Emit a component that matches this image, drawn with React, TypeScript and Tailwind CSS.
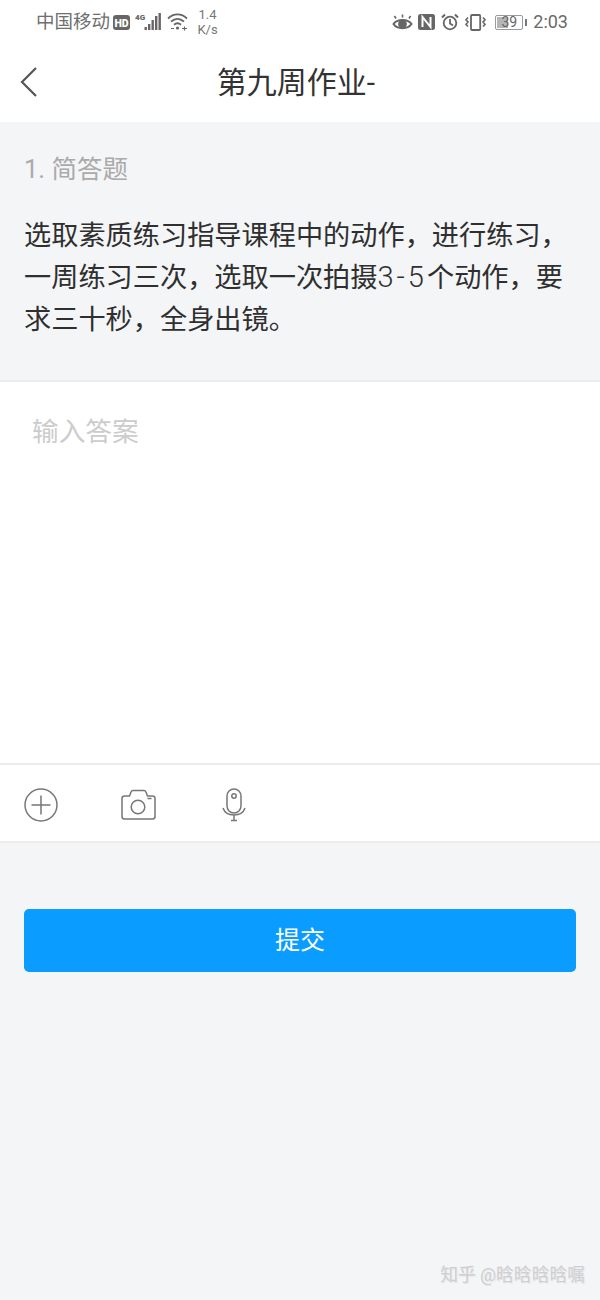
import React from "react";

const cjk = { fontFamily: '"Roboto", "Noto Sans CJK SC", sans-serif' };

function StatusLeft() {
  return (
    <div className="flex items-center text-[#6f6f6f]">
      <span className="text-[18.5px] leading-none">中国移动</span>
      <svg width="17" height="15" viewBox="0 0 17 15" className="ml-[3px]">
        <rect x="0" y="0" width="17" height="15" rx="3" fill="#666" />
        <text x="8.5" y="11.5" textAnchor="middle" fontSize="10.5" fontWeight="900" fill="#fff" fontFamily="Roboto">HD</text>
      </svg>
      <svg width="28" height="20" viewBox="0 0 28 20" className="ml-[5px]">
        <text x="0" y="7.5" fontSize="8" fontWeight="900" fill="#666" fontFamily="Roboto">4G</text>
        <rect x="9.5" y="15" width="2.4" height="3" fill="#666" />
        <rect x="13" y="12" width="2.4" height="6" fill="#666" />
        <rect x="16.5" y="8" width="2.4" height="10" fill="#666" />
        <rect x="20" y="4" width="2.4" height="14" fill="#666" />
        <rect x="23.5" y="1" width="2.4" height="17" fill="#666" />
      </svg>
      <svg width="22" height="18" viewBox="0 0 22 18" fill="none" stroke="#666" strokeWidth="1.8" className="ml-[4px]">
        <path d="M1 5.5 C6.5 0 14.5 0 20 5.5" />
        <path d="M4 8.7 C8 5 13 5 17 8.7" />
        <path d="M7 11.8 C9.5 9.6 11.5 9.6 14 11.8" />
        <circle cx="10.5" cy="15" r="1.6" fill="#666" stroke="none" />
        <path d="M4 15.5H7M15 15.5h5M17.5 13.5v4" strokeWidth="1.2" />
      </svg>
      <div className="ml-[8px] flex w-[21px] flex-col items-center text-[13px] leading-[15px] text-[#777]">
        <span>1.4</span>
        <span>K/s</span>
      </div>
    </div>
  );
}

function StatusRight() {
  return (
    <div className="flex items-center text-[#6f6f6f]">
      <svg width="21" height="17" viewBox="0 0 21 17" fill="none" stroke="#666" strokeWidth="2">
        <path d="M1.5 10 C5 4.5 16 4.5 19.5 10 C16 15.5 5 15.5 1.5 10Z" />
        <circle cx="10.5" cy="10" r="3.4" fill="#666" />
        <path d="M4 4.5 2.5 2M10.5 3.5V0.5M17 4.5 18.5 2" strokeWidth="1.6" />
      </svg>
      <svg width="17" height="16" viewBox="0 0 17 16" className="ml-[5px]">
        <rect x="0" y="0" width="17" height="16" rx="2.5" fill="#666" />
        <path d="M4.5 13V3L12.5 13V3" fill="none" stroke="#fff" strokeWidth="2" />
      </svg>
      <svg width="18" height="18" viewBox="0 0 18 18" fill="none" stroke="#666" strokeWidth="1.8" className="ml-[6px]">
        <circle cx="9" cy="10" r="6.3" />
        <path d="M9 6V10.5L12 12.5" />
        <path d="M1 4.5 4 1.5M17 4.5l-3-3" strokeWidth="2" />
      </svg>
      <svg width="21" height="17" viewBox="0 0 21 17" fill="none" stroke="#666" strokeWidth="1.6" className="ml-[6px]">
        <rect x="6" y="1" width="9.2" height="15" rx="1" strokeWidth="1.8" />
        <path d="M3 3.5 1 5.8 3 8 1 10.3 3 12.5M18 3.5l2 2.3-2 2.2 2 2.3-2 2.2" />
      </svg>
      <div className="relative ml-[9px] flex h-[15px] w-[28px] items-center justify-center rounded-[2px] border border-[#9a9a9a] text-[14px] leading-none text-[#666]">
        <div className="absolute inset-y-[1px] left-[1px] w-[11px] bg-[#b5b5b5]" />
        <span className="relative">39</span>
      </div>
      <div className="ml-[2px] h-[7px] w-[2px] bg-[#777]" />
      <span className="ml-[6px] text-[18px] leading-none text-[#6a6a6a]">2:03</span>
    </div>
  );
}

export default function App() {
  return (
    <div className="flex h-[1300px] w-[600px] flex-col bg-[#f4f5f7]" style={cjk}>
      <div className="bg-white">
        <div className="flex h-[44px] items-center justify-between pl-[36px] pr-[32px]">
          <StatusLeft />
          <StatusRight />
        </div>
        <div className="relative flex h-[78px] items-center justify-center pr-[8px]">
          <svg width="20" height="32" viewBox="0 0 20 32" fill="none" stroke="#555" strokeWidth="2.2" className="absolute left-[19px] top-[22px]">
            <path d="M17 2 3 16l14 14" />
          </svg>
          <span className="text-[30px] leading-none text-[#333]">第九周作业-</span>
        </div>
      </div>

      <div className="h-[258px] pl-[24px] pr-[25px] pt-[34px]">
        <div className="text-[25.5px] leading-[26px] text-[#aaaaaa]">1. 简答题</div>
        <p className="mt-[33px] text-[27.2px] leading-[42px] text-[#2f2f2f]">
          选取素质练习指导课程中的动作，进行练习，一周练习三次，选取一次拍摄<span className="text-[29px] leading-none font-light tracking-[3px]">3-5</span>个动作，要求三十秒，全身出镜。
        </p>
      </div>

      <div className="h-[385px] border-y-2 border-[#ececec] bg-white pl-[32px] pr-[33px] pt-[33px]">
        <div className="text-[26.7px] leading-[34px] text-[#cccccc]">输入答案</div>
      </div>

      <div className="flex h-[78px] items-center border-b-2 border-[#ececec] bg-white pl-[24px] pt-[3px]">
        <svg width="34" height="34" viewBox="0 0 34 34" fill="none" stroke="#777" strokeWidth="1.5">
          <circle cx="17" cy="17" r="16" />
          <path d="M17 7.5V26.5M7.5 17H26.5" />
        </svg>
        <svg width="35" height="32" viewBox="0 0 35 32" fill="none" stroke="#777" strokeWidth="1.5" className="ml-[63px]">
          <path d="M3.5 7h5l1.5-4q.5-1.5 2-1.5h11q1.5 0 2 1.5L26.5 7h5q2.5 0 2.5 2.5v18q0 2.5-2.5 2.5h-28q-2.5 0-2.5-2.5v-18Q1 7 3.500 7Z" />
          <circle cx="17" cy="18" r="6.8" />
          <path d="M26.500 9.500h4" />
        </svg>
        <svg width="24" height="34" viewBox="0 0 24 34" fill="none" stroke="#777" strokeWidth="1.5" className="ml-[66px]">
          <rect x="5" y="1" width="14" height="24" rx="7" />
          <circle cx="12" cy="8" r="2.2" />
          <path d="M1 20c1.500 4.500 5 7 11 7s9.500-2.500 11-7M12 27v5M9 32.500h6" />
        </svg>
      </div>

      <div className="px-[24px] pt-[66px]">
        <button className="flex h-[63px] w-full items-center justify-center rounded-[5px] bg-[#0a9cff] text-[25px] leading-none text-white">
          提交
        </button>
      </div>

      <div className="mt-auto flex justify-end pb-[13px] pr-[15px] text-[17.8px] leading-[24px] text-[#cfcfd1] [text-shadow:1px_1px_1px_#e4e4e6]">
        知乎 @晗晗晗晗嘱
      </div>
    </div>
  );
}
